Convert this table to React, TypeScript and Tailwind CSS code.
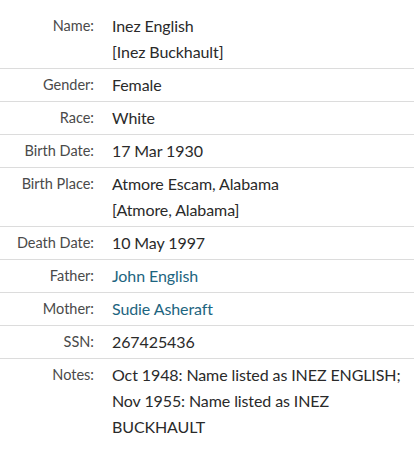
const rows: { label: string; lines: string[]; link?: boolean }[] = [
  { label: "Name:", lines: ["Inez English", "[Inez Buckhault]"] },
  { label: "Gender:", lines: ["Female"] },
  { label: "Race:", lines: ["White"] },
  { label: "Birth Date:", lines: ["17 Mar 1930"] },
  { label: "Birth Place:", lines: ["Atmore Escam, Alabama", "[Atmore, Alabama]"] },
  { label: "Death Date:", lines: ["10 May 1997"] },
  { label: "Father:", lines: ["John English"], link: true },
  { label: "Mother:", lines: ["Sudie Asheraft"], link: true },
  { label: "SSN:", lines: ["267425436"] },
  {
    label: "Notes:",
    lines: ["Oct 1948: Name listed as INEZ ENGLISH; Nov 1955: Name listed as INEZ BUCKHAULT"],
  },
]

export default function App() {
  return (
    <div className="min-h-[449px] bg-white pt-[10px] font-['Lato',sans-serif]">
      {rows.map((row, i) => (
        <div
          key={row.label}
          className={`flex py-[3px] ${i < rows.length - 1 ? "border-b border-[#dcdcdc]" : ""}`}
        >
          <div className="w-[96px] shrink-0 pr-[2px] text-right text-[14.5px] leading-[26px] text-[#4a4a4a]">
            {row.label}
          </div>
          <div className="ml-[16px] flex-1 pr-[6px] text-[16px] tracking-[-0.1px] leading-[26px] text-[#2a2a2a]">
            {row.lines.map((line) => (
              <div key={line} className={row.link ? "text-[#1d6580]" : ""}>
                {line}
              </div>
            ))}
          </div>
        </div>
      ))}
    </div>
  )
}
